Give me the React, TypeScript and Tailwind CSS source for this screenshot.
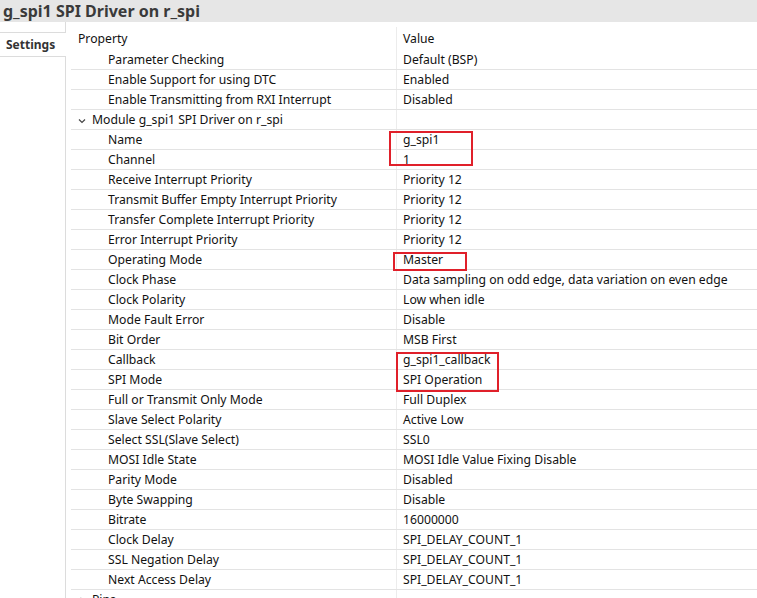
import React from 'react'

type Row = {
  label: string
  value?: string
  level: 'leaf' | 'group'
  open?: boolean
}

const rows: Row[] = [
  { label: 'Parameter Checking', value: 'Default (BSP)', level: 'leaf' },
  { label: 'Enable Support for using DTC', value: 'Enabled', level: 'leaf' },
  { label: 'Enable Transmitting from RXI Interrupt', value: 'Disabled', level: 'leaf' },
  { label: 'Module g_spi1 SPI Driver on r_spi', level: 'group', open: true },
  { label: 'Name', value: 'g_spi1', level: 'leaf' },
  { label: 'Channel', value: '1', level: 'leaf' },
  { label: 'Receive Interrupt Priority', value: 'Priority 12', level: 'leaf' },
  { label: 'Transmit Buffer Empty Interrupt Priority', value: 'Priority 12', level: 'leaf' },
  { label: 'Transfer Complete Interrupt Priority', value: 'Priority 12', level: 'leaf' },
  { label: 'Error Interrupt Priority', value: 'Priority 12', level: 'leaf' },
  { label: 'Operating Mode', value: 'Master', level: 'leaf' },
  { label: 'Clock Phase', value: 'Data sampling on odd edge, data variation on even edge', level: 'leaf' },
  { label: 'Clock Polarity', value: 'Low when idle', level: 'leaf' },
  { label: 'Mode Fault Error', value: 'Disable', level: 'leaf' },
  { label: 'Bit Order', value: 'MSB First', level: 'leaf' },
  { label: 'Callback', value: 'g_spi1_callback', level: 'leaf' },
  { label: 'SPI Mode', value: 'SPI Operation', level: 'leaf' },
  { label: 'Full or Transmit Only Mode', value: 'Full Duplex', level: 'leaf' },
  { label: 'Slave Select Polarity', value: 'Active Low', level: 'leaf' },
  { label: 'Select SSL(Slave Select)', value: 'SSL0', level: 'leaf' },
  { label: 'MOSI Idle State', value: 'MOSI Idle Value Fixing Disable', level: 'leaf' },
  { label: 'Parity Mode', value: 'Disabled', level: 'leaf' },
  { label: 'Byte Swapping', value: 'Disable', level: 'leaf' },
  { label: 'Bitrate', value: '16000000', level: 'leaf' },
  { label: 'Clock Delay', value: 'SPI_DELAY_COUNT_1', level: 'leaf' },
  { label: 'SSL Negation Delay', value: 'SPI_DELAY_COUNT_1', level: 'leaf' },
  { label: 'Next Access Delay', value: 'SPI_DELAY_COUNT_1', level: 'leaf' },
  { label: 'Pins', level: 'group', open: false },
]

function Chevron({ open }: { open?: boolean }) {
  return (
    <svg width="8" height="8" viewBox="0 0 8 8" className="shrink-0">
      {open ? (
        <path d="M1 2.5 L4 5.5 L7 2.5" fill="none" stroke="#444" strokeWidth="1.2" />
      ) : (
        <path d="M2.5 1 L5.5 4 L2.5 7" fill="none" stroke="#444" strokeWidth="1.2" />
      )}
    </svg>
  )
}

function PropRow({ row }: { row: Row }) {
  return (
    <div className="grid grid-cols-[325px_1fr] h-[20px] shrink-0 border-b border-[#e3e3e3]">
      <div className="flex items-center pt-[2px] overflow-hidden whitespace-nowrap">
        {row.level === 'group' ? (
          <div className="flex items-center pl-[7px] gap-[6px]">
            <Chevron open={row.open} />
            <span>{row.label}</span>
          </div>
        ) : (
          <span className="pl-[37px]">{row.label}</span>
        )}
      </div>
      <div className="flex items-center pt-[2px] border-l border-[#ececec] pl-[6px] overflow-hidden whitespace-nowrap">
        <span>{row.value}</span>
      </div>
    </div>
  )
}

export default function App() {
  return (
    <div className="relative w-[757px] h-[598px] overflow-hidden bg-white flex flex-col font-['Noto_Sans',sans-serif] text-[12.2px] text-[#111]">
      {/* title */}
      <div className="h-[22px] shrink-0 bg-[#e6e6e6] pl-[3px] font-bold text-[16px] leading-[23px] text-[#3a3a3a]">
        g_spi1 SPI Driver on r_spi
      </div>

      <div className="flex flex-1 min-h-0">
        {/* tabs */}
        <div className="w-[66px] shrink-0 flex flex-col">
          <div className="h-[10px] border-r border-[#dcdcdc]" />
          <div className="h-[25px] border-y border-[#dcdcdc] pl-[6px] flex items-center font-bold text-[12px] text-[#333]">
            Settings
          </div>
          <div className="flex-1 border-r border-[#dcdcdc]" />
        </div>

        {/* property table */}
        <div className="flex-1 min-w-0 pl-[5px] flex flex-col">
          <div className="grid grid-cols-[325px_1fr] h-[28px] shrink-0">
            <div className="pl-[7px] pt-[8px]">Property</div>
            <div className="mt-[5px] border-l border-[#ececec] pl-[6px] pt-[3px]">Value</div>
          </div>
          {rows.map((r) => (
            <PropRow key={r.label} row={r} />
          ))}
        </div>
      </div>

      {/* highlight boxes */}
      <div className="absolute left-[389px] top-[131px] w-[84px] h-[35px] border-2 border-[#e0202a]" />
      <div className="absolute left-[393px] top-[252px] w-[74px] h-[19px] border-2 border-[#e0202a]" />
      <div className="absolute left-[396px] top-[352px] w-[103px] h-[40px] border-2 border-[#e0202a]" />
    </div>
  )
}
